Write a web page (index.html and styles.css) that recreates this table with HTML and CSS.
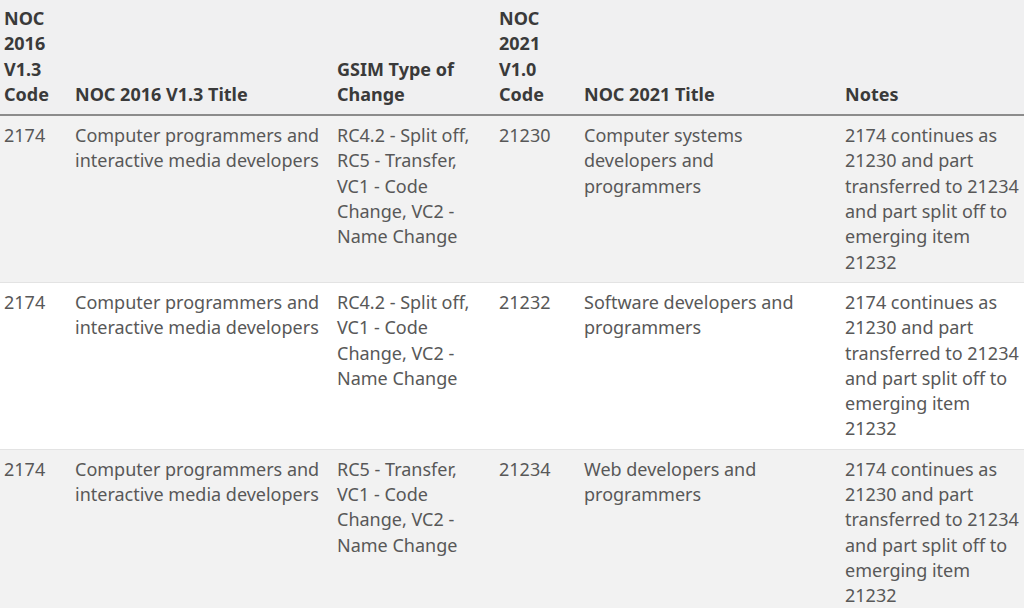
FILE: index.html
```html
<!DOCTYPE html>
<html>
<head>
<meta charset="utf-8">
<link rel="stylesheet" href="styles.css">
</head>
<body>
<table class="noc">
  <colgroup>
    <col class="c1"><col class="c2"><col class="c3"><col class="c4"><col class="c5"><col class="c6">
  </colgroup>
  <thead>
    <tr>
      <th>NOC 2016 V1.3 Code</th>
      <th>NOC 2016 V1.3 Title</th>
      <th>GSIM Type of Change</th>
      <th>NOC 2021 V1.0 Code</th>
      <th>NOC 2021 Title</th>
      <th>Notes</th>
    </tr>
  </thead>
  <tbody>
    <tr>
      <td>2174</td>
      <td>Computer programmers and interactive media developers</td>
      <td>RC4.2 - Split off, RC5 - Transfer, VC1 - Code Change, VC2 - Name Change</td>
      <td>21230</td>
      <td>Computer systems developers and programmers</td>
      <td>2174 continues as 21230 and part transferred to 21234 and part split off to emerging item 21232</td>
    </tr>
    <tr>
      <td>2174</td>
      <td>Computer programmers and interactive media developers</td>
      <td>RC4.2 - Split off, VC1 - Code Change, VC2 - Name Change</td>
      <td>21232</td>
      <td>Software developers and programmers</td>
      <td>2174 continues as 21230 and part transferred to 21234 and part split off to emerging item 21232</td>
    </tr>
    <tr>
      <td>2174</td>
      <td>Computer programmers and interactive media developers</td>
      <td>RC5 - Transfer, VC1 - Code Change, VC2 - Name Change</td>
      <td>21234</td>
      <td>Web developers and programmers</td>
      <td>2174 continues as 21230 and part transferred to 21234 and part split off to emerging item 21232</td>
    </tr>
  </tbody>
</table>
</body>
</html>
```
FILE: styles.css
```css
html, body {
  margin: 0;
  padding: 0;
  background: #ffffff;
  overflow: hidden;
}
.noc {
  border-collapse: collapse;
  table-layout: fixed;
  width: 1032px;
  font-family: "Noto Sans", "Open Sans", sans-serif;
  font-size: 18px;
  line-height: 25.3px;
  color: #585858;
}
.c1 { width: 67px; }
.c2 { width: 262px; }
.c3 { width: 162px; }
.c4 { width: 85px; }
.c5 { width: 261px; }
.c6 { width: 195px; }
.noc th, .noc td {
  text-align: left;
  vertical-align: top;
  padding: 7px 8px 7px 8px;
}
.noc th:first-child, .noc td:first-child {
  padding-left: 4px;
}
.noc thead th {
  vertical-align: bottom;
  font-weight: 700;
  color: #3a3a3a;
  background: #f0f0f1;
  padding-top: 6px;
  padding-bottom: 7px;
  border-bottom: 2px solid #8c8c8c;
}
.noc tbody tr {
  border-bottom: 1px solid #e3e3e3;
}
.noc tbody tr:nth-child(odd) {
  background: #f2f2f2;
}
.noc tbody tr:nth-child(even) {
  background: #ffffff;
}
```
